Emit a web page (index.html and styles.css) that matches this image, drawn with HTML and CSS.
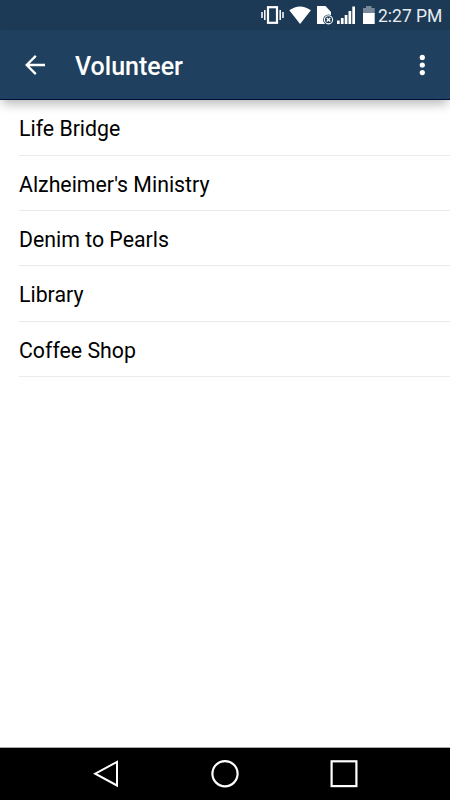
FILE: index.html
```html
<!DOCTYPE html>
<html>
<head>
<meta charset="utf-8">
<title>Volunteer</title>
<link rel="stylesheet" href="styles.css">
</head>

<body>
<div class="wrap">
	<div class="status">
		<svg class="icons" width="116" height="30" viewBox="260 0 116 30">
			<!-- vibrate -->
			<rect x="268" y="7.2" width="9" height="15.6" fill="none" stroke="#fff" stroke-width="2.2"/>
			<path d="M264.8 10v10M262 12v6M280.2 10v10M283 12v6" stroke="#fff" stroke-width="1.5"/>
			<!-- wifi -->
			<path d="M289.3 10.2Q300 2.6 310.9 10.2L300.1 24z" fill="#fff"/>
			<!-- sim -->
			<path d="M317 6h8.5l5.5 6v12h-14z" fill="#fff"/>
			<circle cx="328.5" cy="19.8" r="5.4" fill="#1c3a55"/>
			<circle cx="328.5" cy="19.8" r="4.1" fill="none" stroke="#fff" stroke-width="1.1"/>
			<path d="M326.7 18l3.6 3.6M330.3 18l-3.6 3.6" stroke="#fff" stroke-width="1.4"/>
			<!-- signal -->
			<path d="M337 20.5h2.7v3.5h-2.7zM340.9 18h2.7v6h-2.7zM344.7 15h2.7v9h-2.7zM348.5 11h2.7v13h-2.7zM352.3 6.5h2.7v17.5h-2.7z" fill="#fff"/>
			<!-- battery -->
			<path d="M366 6h5.5v2h3.2v6h-11.7v-6h3z" fill="#778999"/>
			<path d="M363 13h11.7v11h-11.7z" fill="#fff"/>
		</svg>
		<span class="time">2:27 PM</span>
	</div>
	<div class="bar">
		<svg class="back" width="22" height="22" viewBox="0 0 22 22">
			<path d="M20 11H2M10.8 1.9L1.7 11l9.1 9.1" fill="none" stroke="#fff" stroke-width="2.3"/>
		</svg>
		<h1 class="title">Volunteer</h1>
		<svg class="more" width="6" height="22" viewBox="0 0 6 22">
			<circle cx="3.3" cy="3.4" r="2.6" fill="#fff"/>
			<circle cx="3.3" cy="11" r="2.6" fill="#fff"/>
			<circle cx="3.3" cy="18.6" r="2.6" fill="#fff"/>
		</svg>
	</div>
	<ul class="list">
		<li><span>Life Bridge</span></li>
		<li><span>Alzheimer's Ministry</span></li>
		<li><span>Denim to Pearls</span></li>
		<li><span>Library</span></li>
		<li><span>Coffee Shop</span></li>
	</ul>
	<div class="nav">
		<svg width="28" height="30" viewBox="0 0 28 30">
			<path d="M25 2.9v23.6L3.2 14.7z" fill="none" stroke="#fff" stroke-width="2"/>
		</svg>
		<svg width="28" height="30" viewBox="0 0 28 30">
			<circle cx="14" cy="14.7" r="12.6" fill="none" stroke="#fff" stroke-width="2.2"/>
		</svg>
		<svg width="28" height="30" viewBox="0 0 28 30">
			<rect x="1.6" y="2.3" width="24.8" height="24.8" fill="none" stroke="#fff" stroke-width="2.2"/>
		</svg>
	</div>
</div>
</body>
</html>
```
FILE: styles.css
```css
body{
	margin:0;
	background:#fff;
	font-family:Roboto,"Liberation Sans",sans-serif;
}
.wrap{
	width:450px;
	height:800px;
	overflow:hidden;
	display:flex;
	flex-direction:column;
}
.status{
	height:30px;
	background:#1c3a55;
	display:flex;
	justify-content:flex-end;
	padding-right:8px;
}
.icons{
	margin-right:2px;
}
.time{
	width:64px;
	font-size:17.5px;
	line-height:32px;
	color:#e8edf1;
	white-space:nowrap;
}
.bar{
	height:70px;
	box-sizing:border-box;
	padding:0 25px;
	background:#1f415f;
	border-bottom:1px solid #000d3a;
	box-shadow:0 6px 10px -2px rgba(0,0,0,.28);
	position:relative;
	display:flex;
	align-items:center;
}
.title{
	margin:4px 0 0 28px;
	flex:1;
	font-size:25px;
	font-weight:500;
	line-height:30px;
	color:#fff;
}
.list{
	margin:0;
	padding:.4px 0 0 19px;
	list-style:none;
	flex:1;
}
.list li{
	height:55.3px;
	box-sizing:border-box;
	border-bottom:1px solid #ebebeb;
	font-size:21.3px;
	line-height:57px;
	color:#000;
}
.nav{
	height:53px;
	box-sizing:border-box;
	border-top:1px solid #aaa;
	background:#000;
	display:flex;
	justify-content:center;
	align-items:center;
	gap:91px;
}
```
